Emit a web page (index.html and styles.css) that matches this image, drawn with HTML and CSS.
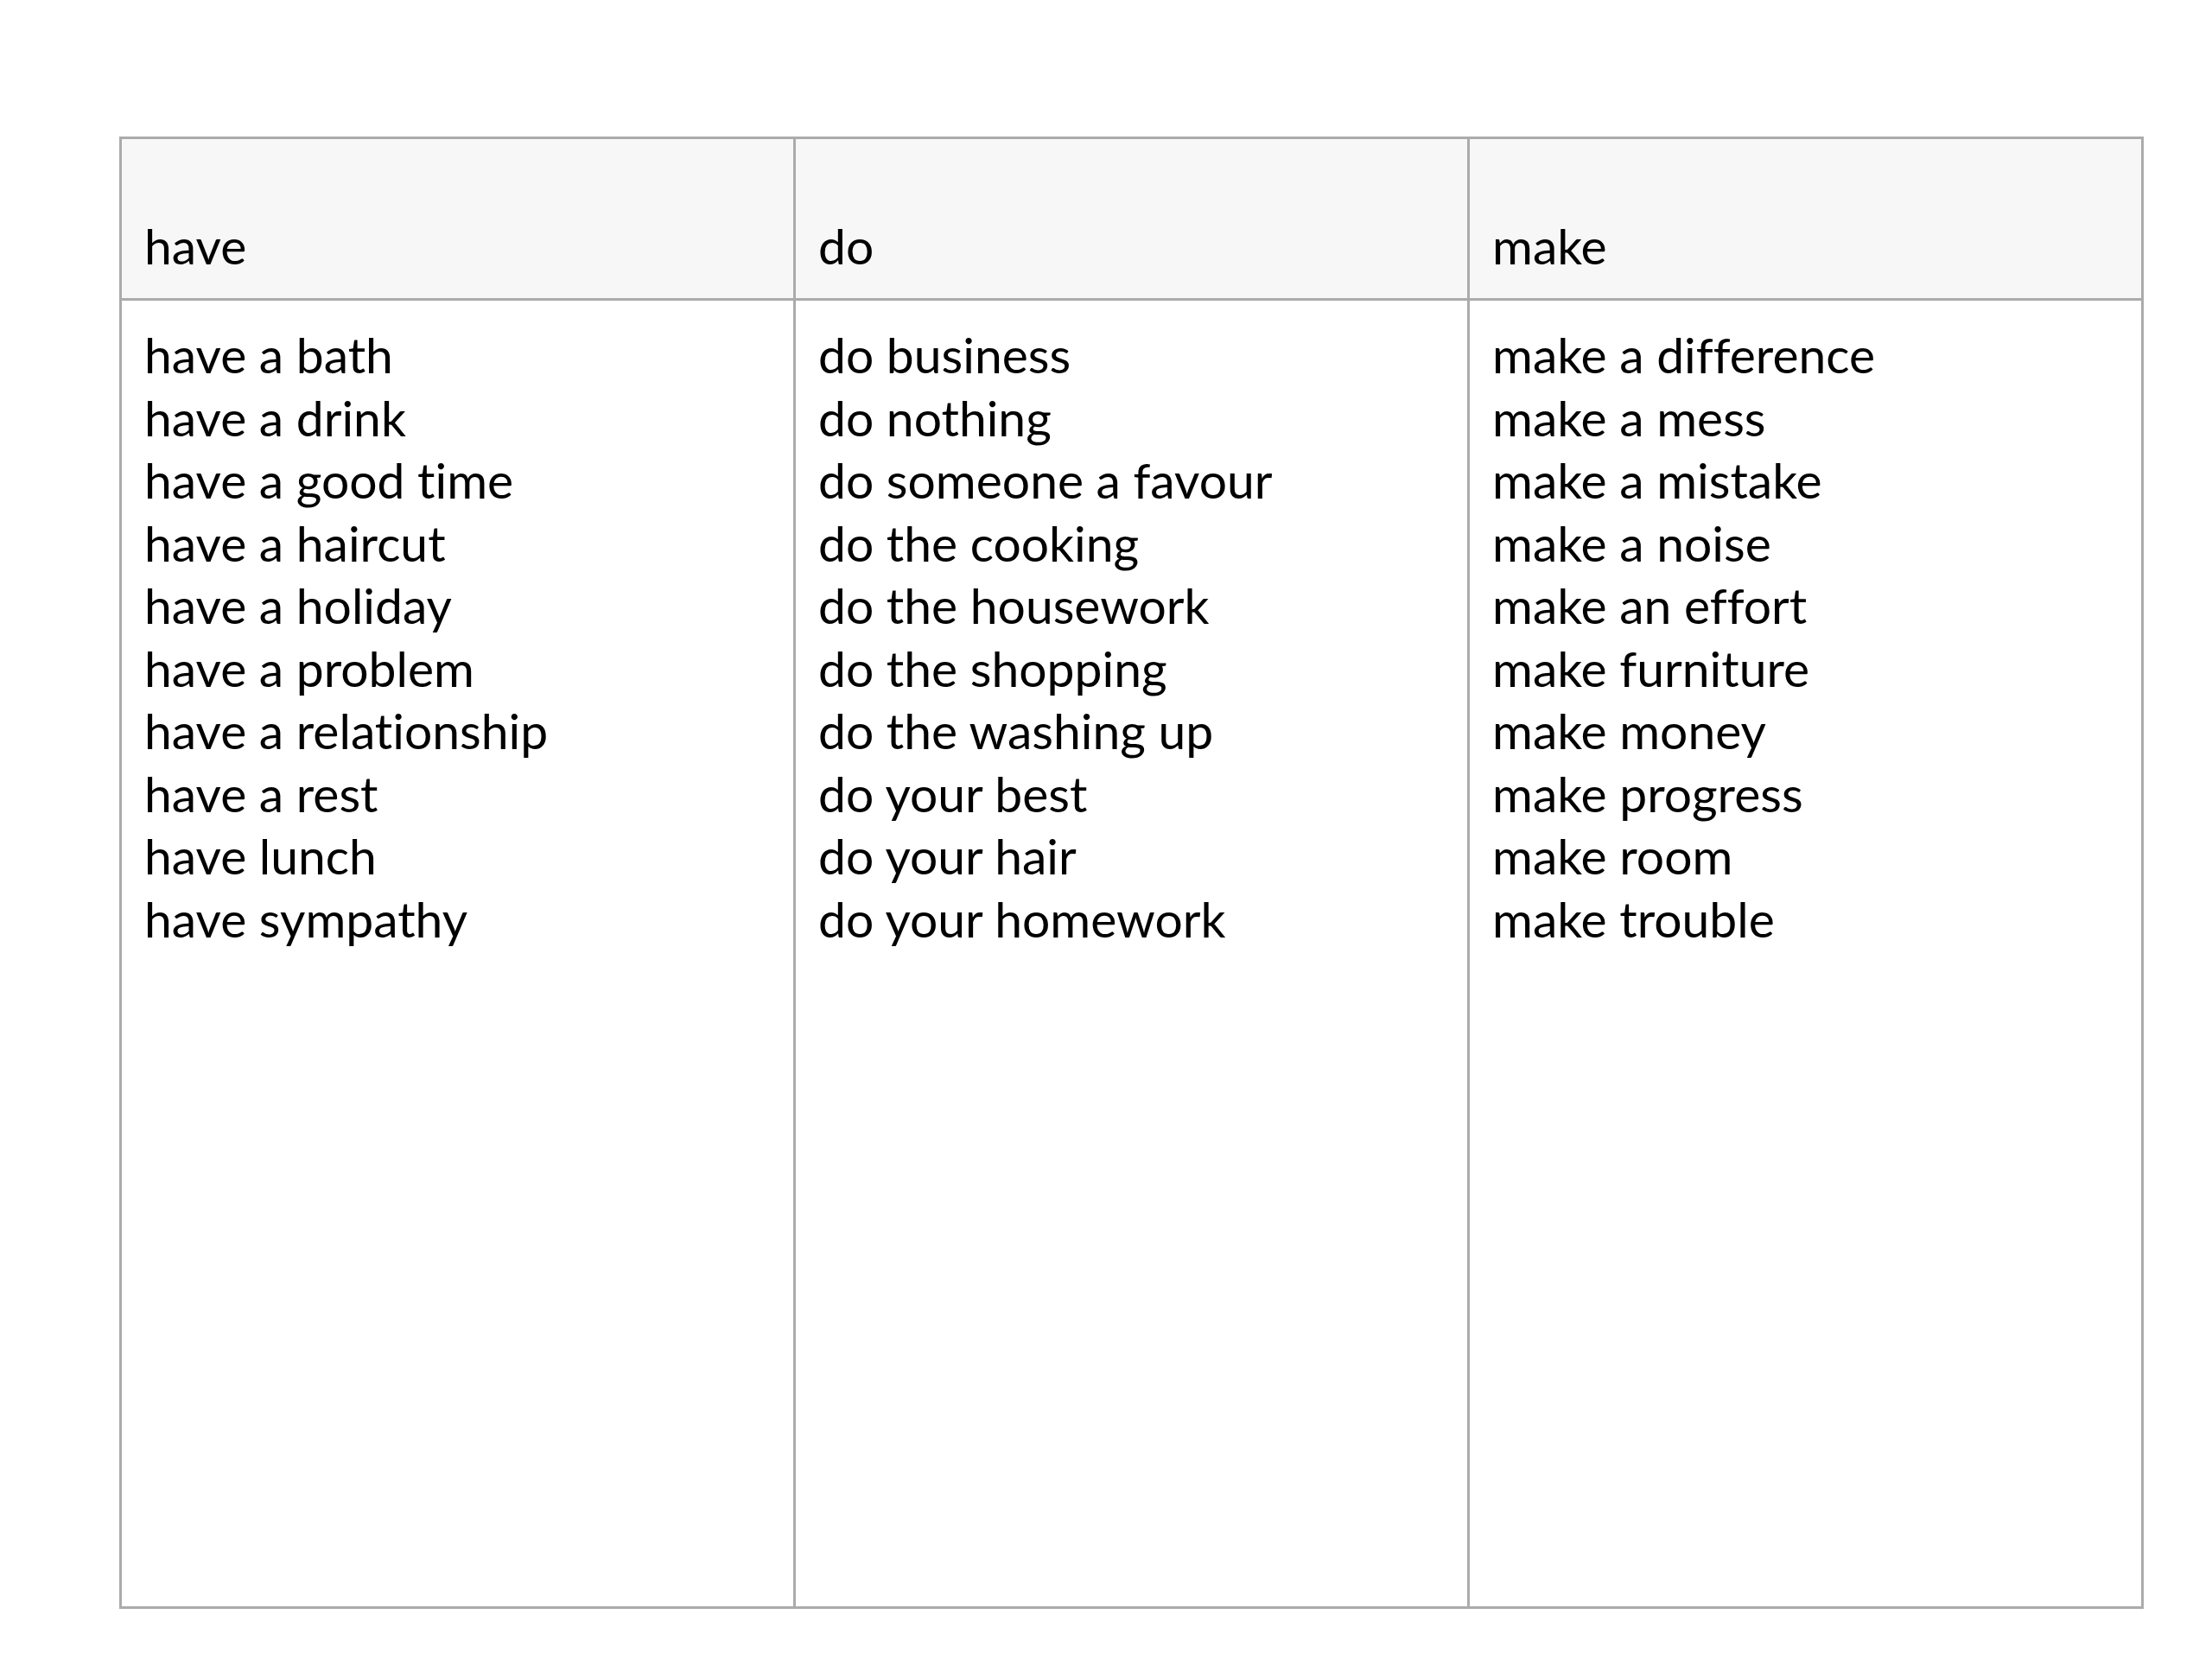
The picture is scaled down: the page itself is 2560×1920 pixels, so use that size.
FILE: index.html
```html
<!DOCTYPE html>
<html>
<head>
<meta charset="utf-8">
<link rel="stylesheet" href="styles.css">
</head>
<body>
<table class="colloc">
  <thead>
    <tr>
      <th>have</th>
      <th>do</th>
      <th>make</th>
    </tr>
  </thead>
  <tbody>
    <tr>
      <td>
        <div class="line">have a bath</div>
        <div class="line">have a drink</div>
        <div class="line">have a good time</div>
        <div class="line">have a haircut</div>
        <div class="line">have a holiday</div>
        <div class="line">have a problem</div>
        <div class="line">have a relationship</div>
        <div class="line">have a rest</div>
        <div class="line">have lunch</div>
        <div class="line">have sympathy</div>
      </td>
      <td>
        <div class="line">do business</div>
        <div class="line">do nothing</div>
        <div class="line">do someone a favour</div>
        <div class="line">do the cooking</div>
        <div class="line">do the housework</div>
        <div class="line">do the shopping</div>
        <div class="line">do the washing up</div>
        <div class="line">do your best</div>
        <div class="line">do your hair</div>
        <div class="line">do your homework</div>
      </td>
      <td>
        <div class="line">make a difference</div>
        <div class="line">make a mess</div>
        <div class="line">make a mistake</div>
        <div class="line">make a noise</div>
        <div class="line">make an effort</div>
        <div class="line">make furniture</div>
        <div class="line">make money</div>
        <div class="line">make progress</div>
        <div class="line">make room</div>
        <div class="line">make trouble</div>
      </td>
    </tr>
  </tbody>
</table>
</body>
</html>
```

FILE: styles.css
```css
html, body {
  margin: 0;
  padding: 0;
  background: #ffffff;
}
body {
  padding: 158px 0 0 138px;
  font-family: "Lato", "Liberation Sans", sans-serif;
  font-variant-ligatures: none;
  color: #000000;
}
.colloc {
  border-collapse: collapse;
  width: 2343px;
  table-layout: fixed;
}
.colloc th,
.colloc td {
  border: 3px solid #ababab;
  width: 33.33%;
  text-align: left;
  vertical-align: top;
  font-weight: normal;
  font-size: 57px;
  padding: 0 26px;
  box-sizing: border-box;
}
.colloc th {
  background: #f7f7f7;
  height: 187px;
  vertical-align: bottom;
  line-height: 72px;
  padding-bottom: 25px;
}
.colloc td {
  height: 1514px;
  padding-top: 26px;
}
.line {
  line-height: 72.5px;
}
```
